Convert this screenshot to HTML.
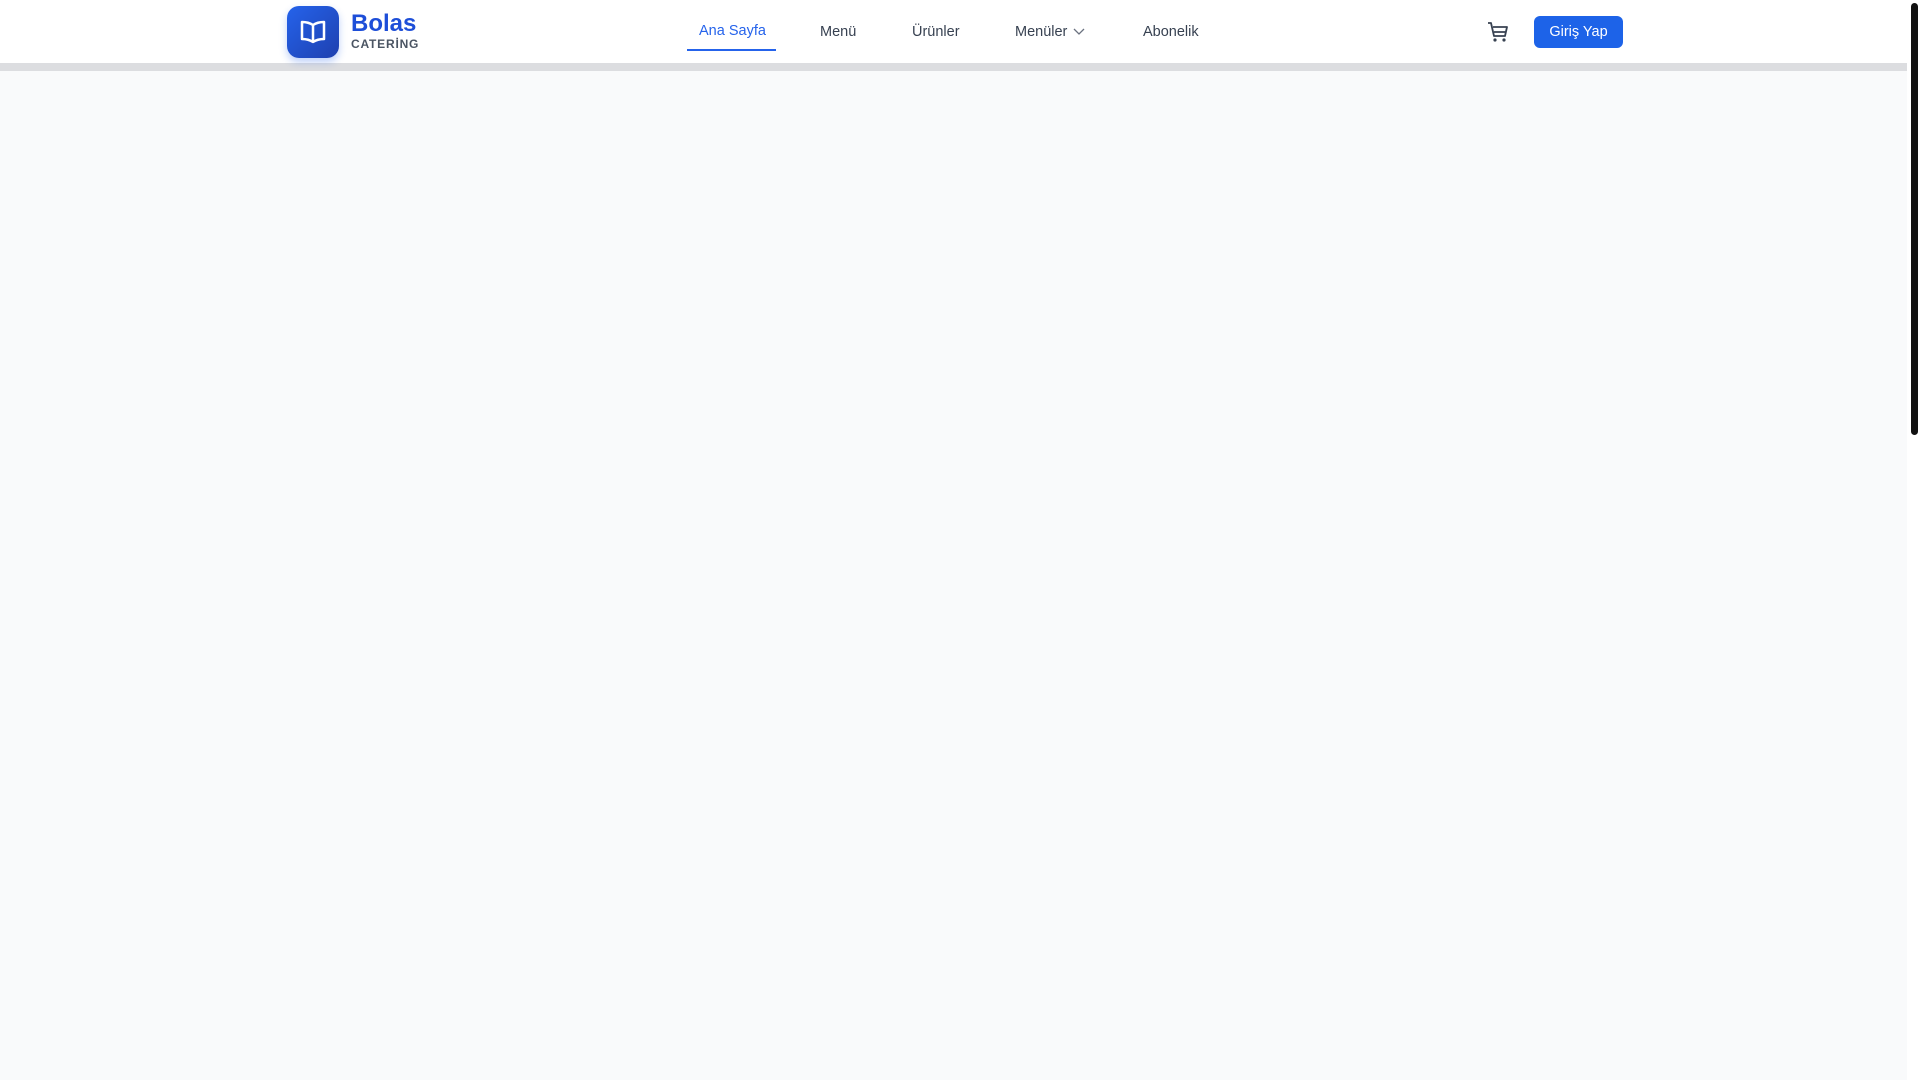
<!DOCTYPE html>
<html><head><meta charset="utf-8"><style>
*{margin:0;padding:0;box-sizing:border-box}
body{width:1920px;height:1080px;background:#f9fafb;font-family:"Liberation Sans",sans-serif;position:relative;overflow:hidden}
.hdr{position:absolute;left:0;top:0;width:1907px;height:63px;background:#fff}
.strip{position:absolute;left:0;top:63px;width:1907px;height:8px;background:#dcdde0}
.sb{position:absolute;left:1907px;top:0;width:13px;height:1080px;background:#fff}
.thumb{position:absolute;left:1911px;top:3px;width:7px;height:432px;background:#111;border-radius:4px}
.logo{position:absolute;left:287px;top:6px;width:52px;height:52px;border-radius:12px;background:linear-gradient(135deg,#2563eb,#1e40af);box-shadow:0 4px 8px rgba(37,99,235,.3)}
.t{position:absolute;white-space:nowrap}
.nav{font-size:14.5px;color:#374151;top:24px}
</style></head><body>
<div class="hdr"></div><div class="strip"></div>
<div class="sb"></div><div class="thumb"></div>
<div class="logo"><svg width="52" height="52" viewBox="0 0 52 52"><path d="M26 19c-3-2-7-3-11-3v17c4 0 8 1 11 3c3-2 7-3 11-3V16c-4 0-8 1-11 3zM26 19v17" fill="none" stroke="#fff" stroke-width="2.5" stroke-linejoin="round"/></svg></div>
<div class="t" style="left:351px;top:10px;font-size:24px;font-weight:bold;color:#1d4ed8">Bolas</div>
<div class="t" style="left:351px;top:37px;font-size:12px;font-weight:bold;color:#4b5563;letter-spacing:0.8px">CATERİNG</div>
<div class="t nav" style="left:699px;top:23px;color:#2563eb">Ana Sayfa</div>
<div style="position:absolute;left:687px;top:49px;width:89px;height:2px;background:#2563eb"></div>
<div class="t nav" style="left:820px">Menü</div>
<div class="t nav" style="left:912px">Ürünler</div>
<div class="t nav" style="left:1015px">Menüler</div>
<svg class="t" style="left:1072px;top:26px" width="14" height="10" viewBox="0 0 14 10"><path d="M2 3l5 5 5-5" fill="none" stroke="#6b7280" stroke-width="1.3"/></svg>
<div class="t nav" style="left:1143px">Abonelik</div>
<svg class="t" style="left:1485px;top:20px" width="26" height="24" viewBox="0 0 26 24"><path d="M3 3h3l3 13h11l2-9H8M9 12h12" fill="none" stroke="#374151" stroke-width="1.8" stroke-linejoin="round"/><circle cx="10" cy="20" r="1.6" fill="#374151"/><circle cx="19" cy="20" r="1.6" fill="#374151"/></svg>
<div style="position:absolute;left:1534px;top:16px;width:89px;height:32px;border-radius:6px;background:#1d63e8;color:#fff;font-size:14.5px;text-align:center;line-height:33px">Giriş Yap</div>
</body></html>
